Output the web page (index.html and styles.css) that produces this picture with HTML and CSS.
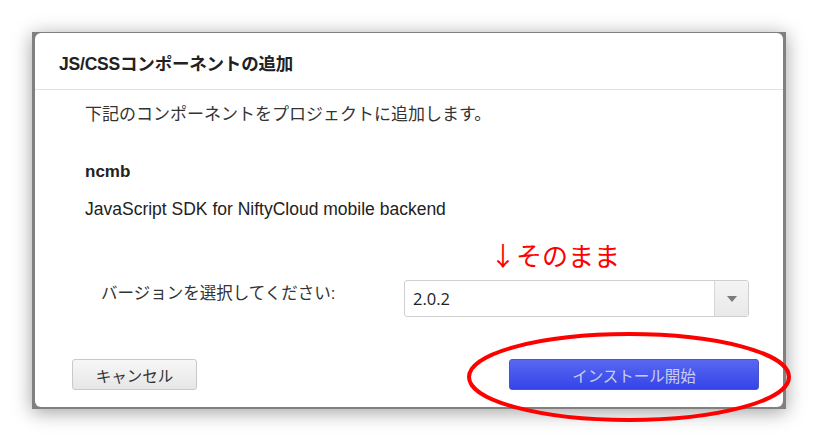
FILE: index.html
```html
<!DOCTYPE html>
<html lang="ja">
<head>
<meta charset="utf-8">
<title>JS/CSSコンポーネントの追加</title>
<link rel="stylesheet" href="styles.css">
</head>
<body>
<div class="page">
  <div class="frame">
    <div class="dialog">
      <div class="header"><h1 class="title">JS/CSSコンポーネントの追加</h1></div>
      <div class="body">
        <p class="intro">下記のコンポーネントをプロジェクトに追加します。</p>
        <p class="name">ncmb</p>
        <p class="desc">JavaScript SDK for NiftyCloud mobile backend</p>
        <p class="note">↓そのまま</p>
        <div class="version-row">
          <span class="label">バージョンを選択してください:</span>
          <div class="select">
            <span class="value">2.0.2</span>
            <span class="arrow"><svg width="10" height="6" viewBox="0 0 10 6"><path d="M0 0H10L5 6Z" fill="#7a7a7a"/></svg></span>
          </div>
        </div>
      </div>
      <div class="footer">
        <button class="btn cancel">キャンセル</button>
        <button class="btn primary">インストール開始</button>
      </div>
    </div>
  </div>
  <svg class="circle" width="340" height="100" viewBox="0 0 340 100"><ellipse cx="170" cy="50" rx="160" ry="43" fill="none" stroke="#ff0000" stroke-width="4"/></svg>
</div>
</body>
</html>
```
FILE: styles.css
```css
html, body {
  margin: 0;
  padding: 0;
  background: #ffffff;
}
.page {
  position: relative;
  width: 820px;
  height: 443px;
  padding: 32px 0 0 32px;
  box-sizing: border-box;
  font-family: "Liberation Sans", "Noto Sans CJK JP", sans-serif;
  color: #333333;
}
.frame {
  width: 754px;
  height: 377px;
  box-sizing: border-box;
  background: #808080;
  padding: 1px 3px 2px 3px;
  box-shadow: 0 3px 18px rgba(0, 0, 0, 0.38);
}
.dialog {
  background: #ffffff;
  border-radius: 6px;
  height: 100%;
  display: flex;
  flex-direction: column;
}
.header {
  height: 57px;
  border-bottom: 1px solid #e2e2e2;
  display: flex;
  align-items: center;
  padding-left: 24px;
  padding-top: 2px;
  box-sizing: border-box;
}
.title {
  margin: 0;
  font-size: 17.5px;
  font-weight: bold;
  color: #222222;
  letter-spacing: -0.2px;
}
.body {
  padding-left: 50px;
  display: flex;
  flex-direction: column;
}
.body p {
  margin: 0;
  line-height: 20px;
}
.intro {
  margin-top: 15px !important;
  font-size: 17px;
  color: #333333;
}
.name {
  margin-top: 37px !important;
  font-size: 17px;
  font-weight: bold;
  color: #222222;
}
.desc {
  margin-top: 17px !important;
  font-size: 17.5px;
  color: #222222;
}
.note {
  margin-top: 21px !important;
  margin-left: 405px !important;
  line-height: 30px !important;
  font-size: 26px;
  color: #ff0000;
  font-family: "Noto Sans CJK JP", sans-serif;
}
.version-row {
  margin-top: 10px;
  display: flex;
  align-items: flex-start;
}
.label {
  padding-left: 16px;
  width: 303px;
  padding-top: 3px;
  font-size: 16.5px;
  color: #333333;
  line-height: 20px;
}
.select {
  width: 345px;
  height: 37px;
  box-sizing: border-box;
  border: 1px solid #cfcfcf;
  border-radius: 3px;
  display: flex;
  align-items: stretch;
  background: #ffffff;
}
.value {
  flex: 1;
  padding-left: 8px;
  display: flex;
  align-items: center;
  font-size: 16.5px;
  color: #222222;
  font-family: "Open Sans", "Liberation Sans", sans-serif;
}
.arrow {
  width: 33px;
  border-left: 1px solid #d6d6d6;
  background: linear-gradient(#f4f4f4, #e9e9e9);
  display: flex;
  align-items: center;
  justify-content: center;
  border-radius: 0 2px 2px 0;
}
.footer {
  margin-top: 42px;
  padding: 0 24px 0 37px;
  display: flex;
  justify-content: space-between;
}
.btn {
  height: 31px;
  border-radius: 3px;
  font-family: "Noto Sans CJK JP", sans-serif;
  font-size: 15.5px;
  padding: 0;
  cursor: pointer;
}
.cancel {
  width: 125px;
  border: 1px solid #c9c9c9;
  background: linear-gradient(#f7f7f7, #e6e6e6);
  color: #333333;
}
.primary {
  width: 250px;
  border: 1px solid #4a56c8;
  background: linear-gradient(#5868f2, #3444e8);
  color: #c9cdec;
}
.circle {
  position: absolute;
  left: 459px;
  top: 327px;
}
```
